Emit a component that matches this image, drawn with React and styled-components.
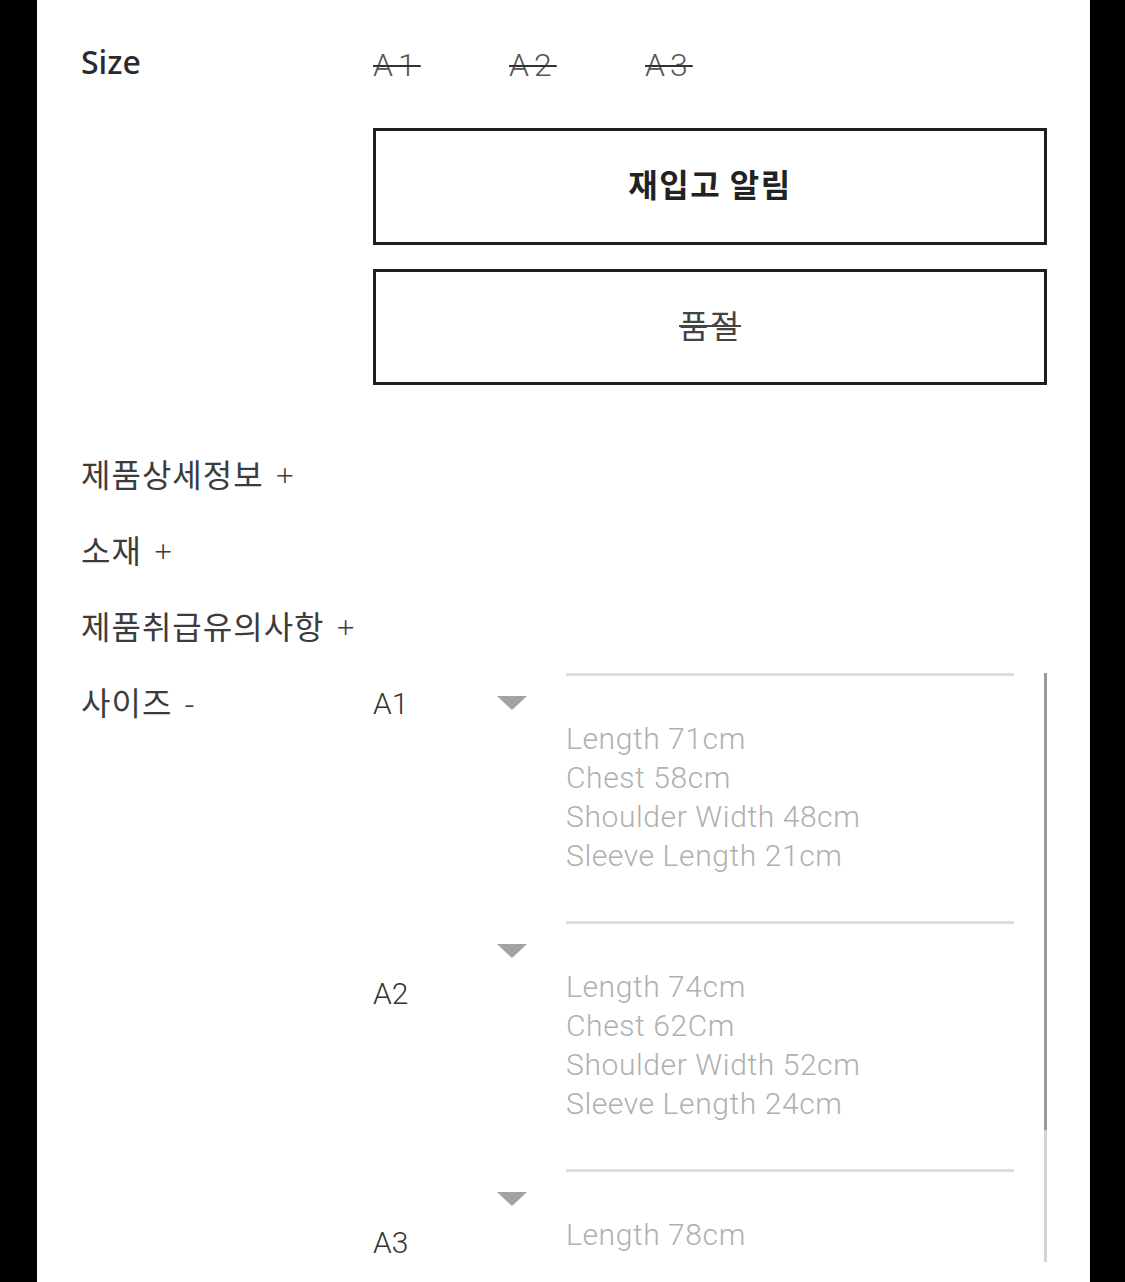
import React from 'react';
import styled, { createGlobalStyle } from 'styled-components';

const GlobalStyle = createGlobalStyle`
  html, body {
    margin: 0;
    background: #000;
  }
  * {
    box-sizing: border-box;
  }
`;

const Frame = styled.div`
  display: flex;
  height: 1282px;
  padding: 0 35px 0 37px;
  background: #000;
`;

const Panel = styled.div`
  flex: 1;
  background: #fff;
  padding: 40px 0 0 44px;
  overflow: hidden;
  font-family: 'Noto Sans CJK KR', 'Noto Sans', sans-serif;
`;

const Row = styled.div`
  display: grid;
  grid-template-columns: 292px 674px;
  margin-top: ${({ $gap }) => $gap || 0}px;
`;

const FieldLabel = styled.div`
  font-family: 'Noto Sans', sans-serif;
  font-size: 32px;
  font-weight: 500;
  line-height: 44px;
  color: #2a2a2a;
`;

const SizeOptions = styled.div`
  display: flex;
  padding-top: 3px;
`;

const SizeOption = styled.span`
  width: 136px;
  font-family: Roboto, sans-serif;
  font-weight: 300;
  font-size: 32px;
  line-height: 44px;
  letter-spacing: 5px;
  color: #555;
  text-decoration: line-through;
  text-decoration-thickness: 2px;
  text-decoration-color: #333;
`;

const ButtonStack = styled.div`
  grid-column: 2;
  display: flex;
  flex-direction: column;
  gap: 24px;
`;

const ActionButton = styled.button`
  height: ${({ $h }) => $h}px;
  width: 100%;
  padding: 0 0 7px;
  border: 3px solid #1f1f1f;
  background: #fff;
  font-family: 'Noto Sans CJK KR', sans-serif;
  font-size: 32px;
  letter-spacing: 1.5px;
  font-weight: ${({ $bold }) => ($bold ? 700 : 400)};
  color: ${({ $bold }) => ($bold ? '#222' : '#444')};
  text-decoration: ${({ $soldOut }) => ($soldOut ? 'line-through' : 'none')};
  text-decoration-thickness: 2px;
  cursor: pointer;
`;

const AccordionList = styled.div`
  margin-top: 50px;
`;

const AccordionItem = styled.div`
  height: 76px;
  font-size: 32px;
  letter-spacing: 1px;
  line-height: 76px;
  color: #3c3c3c;
  white-space: nowrap;
`;

const Toggle = styled.span`
  margin-left: 12px;
  font-family: 'Noto Sans', sans-serif;
  font-weight: 300;
  line-height: 1;
`;

const ChartViewport = styled.div`
  display: flex;
  height: 589px;
  margin-top: 10px;
  overflow: hidden;
`;

const ChartRows = styled.div`
  display: flex;
  flex-direction: column;
  width: 641px;
`;

const ChartRow = styled.div`
  display: flex;
  flex-shrink: 0;
  height: 248px;
`;

const SizeName = styled.div`
  width: 124px;
  padding-top: ${({ $offset }) => $offset}px;
  font-family: Roboto, sans-serif;
  font-weight: 300;
  font-size: 30px;
  line-height: 40px;
  color: #333;
`;

const CaretCell = styled.div`
  width: 69px;
  padding-top: 23px;
`;

const Caret = styled.span`
  display: block;
  width: 0;
  height: 0;
  border-left: 15px solid transparent;
  border-right: 15px solid transparent;
  border-top: 14px solid #a3a3a3;
`;

const Measures = styled.div`
  width: 448px;
  border-top: 3px solid #dedede;
  padding-top: 43px;
  font-family: Roboto, sans-serif;
  font-weight: 300;
  font-size: 30px;
  line-height: 39px;
  letter-spacing: 0.6px;
  color: #b0b0b0;
  white-space: nowrap;
`;

const Scrollbar = styled.div`
  width: 3px;
  margin-left: 30px;
  background: #d4d4d4;
`;

const ScrollThumb = styled.div`
  height: 457px;
  background: #999;
`;

const sizes = [
  {
    name: 'A1',
    offset: 11,
    lines: ['Length 71cm', 'Chest 58cm', 'Shoulder Width 48cm', 'Sleeve Length 21cm'],
  },
  {
    name: 'A2',
    offset: 53,
    lines: ['Length 74cm', 'Chest 62Cm', 'Shoulder Width 52cm', 'Sleeve Length 24cm'],
  },
  {
    name: 'A3',
    offset: 54,
    lines: ['Length 78cm', 'Chest 66cm', 'Shoulder Width 56cm', 'Sleeve Length 27cm'],
  },
];

const sections = ['제품상세정보', '소재', '제품취급유의사항'];

const App = () => {
  return (
    <>
      <GlobalStyle />
      <Frame>
        <Panel>
          <Row>
            <FieldLabel>Size</FieldLabel>
            <SizeOptions>
              {sizes.map((s) => (
                <SizeOption key={s.name}>{s.name}</SizeOption>
              ))}
            </SizeOptions>
          </Row>

          <Row $gap={41}>
            <ButtonStack>
              <ActionButton $h={117} $bold>
                재입고 알림
              </ActionButton>
              <ActionButton $h={116} $soldOut>
                품절
              </ActionButton>
            </ButtonStack>
          </Row>

          <AccordionList>
            {sections.map((title) => (
              <AccordionItem key={title}>
                {title}
                <Toggle>+</Toggle>
              </AccordionItem>
            ))}
            <Row>
              <AccordionItem>
                사이즈
                <Toggle>-</Toggle>
              </AccordionItem>
              <ChartViewport>
                <ChartRows>
                  {sizes.map((s) => (
                    <ChartRow key={s.name}>
                      <SizeName $offset={s.offset}>{s.name}</SizeName>
                      <CaretCell>
                        <Caret />
                      </CaretCell>
                      <Measures>
                        {s.lines.map((line) => (
                          <div key={line}>{line}</div>
                        ))}
                      </Measures>
                    </ChartRow>
                  ))}
                </ChartRows>
                <Scrollbar>
                  <ScrollThumb />
                </Scrollbar>
              </ChartViewport>
            </Row>
          </AccordionList>
        </Panel>
      </Frame>
    </>
  );
};

export default App;
